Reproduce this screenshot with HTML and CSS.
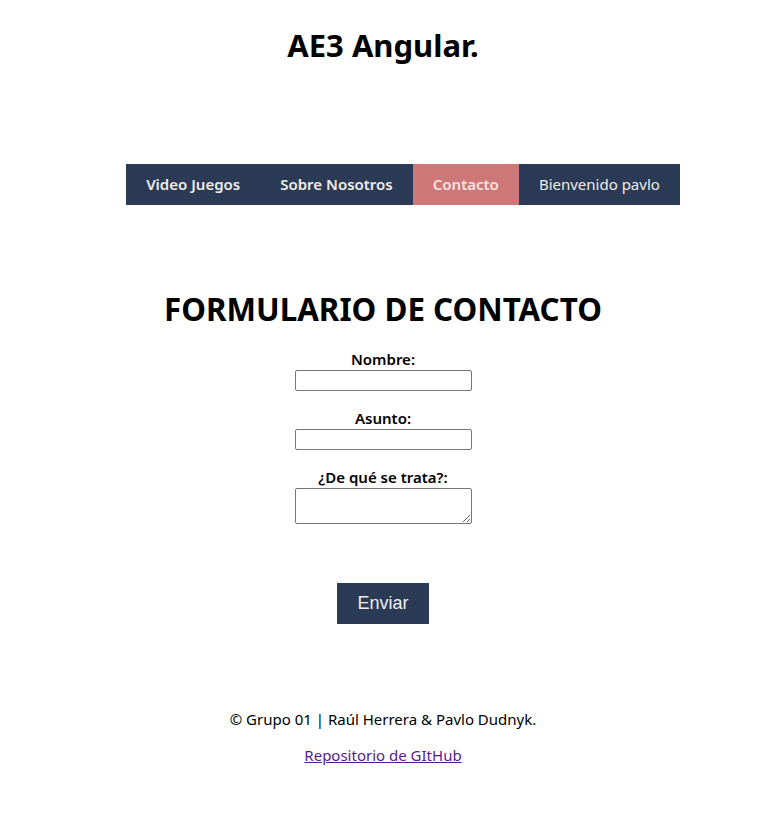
FILE: index.html
```html
<!DOCTYPE html>
<html lang="es">
<head>
<meta charset="utf-8">
<title>AE3 Angular</title>
<link rel="stylesheet" href="styles.css">
</head>
<body>
<header class="site-header">
  <h1 class="site-title">AE3 Angular.</h1>
  <nav class="nav-wrap">
    <ul class="nav">
      <li><a class="nav-link" href="#">Video Juegos</a></li>
      <li><a class="nav-link" href="#">Sobre Nosotros</a></li>
      <li><a class="nav-link active" href="#">Contacto</a></li>
      <li><span class="nav-user">Bienvenido pavlo</span></li>
    </ul>
  </nav>
</header>
<main class="contact">
  <h1 class="contact-title">FORMULARIO DE CONTACTO</h1>
  <form class="form">
    <div class="field">
      <label class="label" for="nombre">Nombre:</label>
      <input class="input" id="nombre" type="text">
    </div>
    <div class="field">
      <label class="label" for="asunto">Asunto:</label>
      <input class="input" id="asunto" type="text">
    </div>
    <div class="field">
      <label class="label" for="msg">¿De qué se trata?:</label>
      <textarea class="textarea" id="msg"></textarea>
    </div>
    <button class="submit" type="button">Enviar</button>
  </form>
</main>
<footer class="footer">
  <p class="copy">© Grupo 01 | Raúl Herrera &amp; Pavlo Dudnyk.</p>
  <a class="repo" href="#">Repositorio de GItHub</a>
</footer>
</body>
</html>
```
FILE: styles.css
```css
body {
  margin: 8px;
  font-family: "Noto Sans", "Open Sans", sans-serif;
  color: #000;
  background: #fff;
}
.site-title {
  text-align: center;
  font-size: 31px;
  font-weight: 700;
  margin: 17px 0 0;
  line-height: 40px;
}
.nav-wrap {
  display: flex;
  justify-content: center;
  margin-top: 99px;
}
.nav {
  display: flex;
  list-style: none;
  margin: 0;
  padding: 0 0 0 40px;
}
.nav-link, .nav-user {
  display: block;
  height: 41px;
  line-height: 41px;
  padding: 0 20px;
  background: #2b3a55;
  color: #f0ece8;
  text-decoration: none;
  font-size: 15px;
  font-weight: 600;
}
.nav-user {
  font-weight: 400;
}
.nav-link.active {
  background: #ce7777;
  color: #f6e2e2;
}
.contact {
  margin-top: 84px;
}
.contact-title {
  text-align: center;
  font-size: 31.3px;
  font-weight: 700;
  line-height: 40px;
  margin: 0;
}
.form {
  display: flex;
  flex-direction: column;
  align-items: center;
  margin-top: 20px;
}
.field {
  display: flex;
  flex-direction: column;
  align-items: center;
  margin-bottom: 17px;
}
.label {
  font-size: 15px;
  font-weight: 600;
  line-height: 21px;
}
.input, .textarea {
  box-sizing: border-box;
  width: 177px;
  border: 1px solid #767676;
  border-radius: 2px;
  margin: 0;
  padding: 1px 2px;
  font: 13px "Liberation Sans", sans-serif;
}
.input {
  height: 21px;
}
.textarea {
  height: 36px;
  resize: vertical;
}
.submit {
  margin-top: 42px;
  width: 92px;
  height: 41px;
  border: 0;
  background: #2b3a55;
  color: #eef0f4;
  font: 18px "Liberation Sans", Arial, sans-serif;
}
.footer {
  margin-top: 85px;
  text-align: center;
}
.copy {
  margin: 0;
  font-size: 15px;
  line-height: 20px;
}
.repo {
  display: inline-block;
  margin-top: 16px;
  font-size: 15px;
  line-height: 20px;
  color: #551a8b;
}
```
